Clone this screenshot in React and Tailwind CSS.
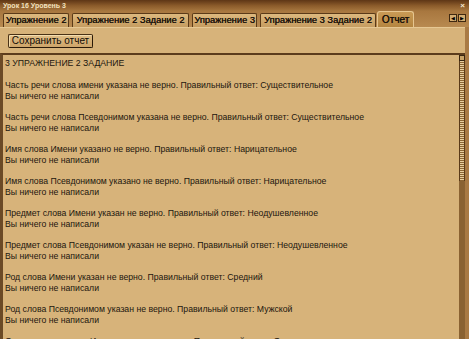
const tabs = [
  { label: "Упражнение 2", w: "w-[66px]" },
  { label: "Упражнение 2 Задание 2", w: "w-[117px]" },
  { label: "Упражнение 3", w: "w-[65px]" },
  { label: "Упражнение 3 Задание 2", w: "w-[116px]" },
];

const entries = [
  "Часть речи слова имени указана не верно. Правильный ответ: Существительное",
  "Часть речи слова Псевдонимом указана не верно. Правильный ответ: Существительное",
  "Имя слова Имени указано не верно. Правильный ответ: Нарицательное",
  "Имя слова Псевдонимом указано не верно. Правильный ответ: Нарицательное",
  "Предмет слова Имени указан не верно. Правильный ответ: Неодушевленное",
  "Предмет слова Псевдонимом указан не верно. Правильный ответ: Неодушевленное",
  "Род слова Имени указан не верно. Правильный ответ: Средний",
  "Род слова Псевдонимом указан не верно. Правильный ответ: Мужской",
  "Одушевление слова Имени указано не верно. Правильный ответ: Одушевленное",
];

export default function App() {
  return (
    <div className="w-[469px] h-[339px] overflow-hidden flex flex-col bg-[#a97a44] font-['Liberation_Sans',Arial,sans-serif]">
      {/* title bar */}
      <div className="h-[11px] shrink-0 flex items-center justify-between px-[3px] bg-gradient-to-b from-[#5e3616] via-[#8a5a2a] to-[#a7773f]">
        <span className="text-[7px] leading-none font-bold text-[#f3e2bf]">Урок 16 Уровень 3</span>
        <span className="text-[8px] leading-none font-bold text-[#f6ead0] mr-[1px]">×</span>
      </div>

      {/* tabs */}
      <div className="h-[16px] shrink-0 flex items-end px-[3px] gap-[3px] bg-gradient-to-b from-[#a8773f] to-[#b88a50]">
        {tabs.map((t) => (
          <div
            key={t.label}
            className={`${t.w} h-[14px] flex items-center justify-center rounded-t-[2px] border border-b-0 border-[#5a3a18] bg-gradient-to-b from-[#ddb97f] to-[#c59c60] text-[9.3px] leading-none text-[#1a120a] whitespace-nowrap [text-shadow:0.3px_0_0_#1a120a]`}
          >
            {t.label}
          </div>
        ))}
        <div className="w-[37px] h-[16px] -ml-[2px] flex items-center justify-center rounded-t-[3px] border border-b-0 border-[#e6c690] bg-gradient-to-b from-[#c99a55] to-[#b48540] text-[10px] leading-none text-[#1a120a] [text-shadow:0.3px_0_0_#1a120a]">
          Отчет
        </div>
        <div className="ml-auto mb-[5px] flex gap-[1px]">
          <div className="w-[8px] h-[8px] border border-[#3f2810] bg-[#d3ad72] flex items-center justify-center text-[5px] leading-none text-black">◀</div>
          <div className="w-[8px] h-[8px] border border-[#3f2810] bg-[#d3ad72] flex items-center justify-center text-[5px] leading-none text-black">▶</div>
        </div>
      </div>

      {/* panel */}
      <div className="flex-1 flex flex-col bg-[#d7b37a] border-t border-[#e6c894] mr-[4px]">
        <div className="h-[25px] shrink-0 flex items-center pl-[8px]">
          <div className="h-[14px] w-[85px] flex items-center justify-center rounded-[2px] border border-[#4a3216] border-r-[#2a1a08] border-b-[#2a1a08] bg-gradient-to-b from-[#e0bf88] to-[#cda468] shadow-[inset_1px_1px_0_#f3dcae] text-[10px] leading-none text-[#120c05]">
            Сохранить отчет
          </div>
        </div>

        <div className="flex-1 flex min-h-0 border-t-2 border-l-[3px] border-[#5c3c1c] border-l-[#6b4a26]">
          <div className="flex-1 overflow-hidden pl-[2px] pt-[3px] text-[8.7px] leading-[11px] text-[#1c160e]">
            <div className="mb-[11px]">3 УПРАЖНЕНИЕ 2 ЗАДАНИЕ</div>
            {entries.map((e, i) => (
              <div key={i} className="mb-[10px] whitespace-nowrap">
                <div>{e}</div>
                <div>Вы ничего не написали</div>
              </div>
            ))}
          </div>

          {/* scrollbar */}
          <div className="w-[6px] shrink-0 flex flex-col bg-[#8a6232]">
            <div className="h-[6px] bg-[#c8a266] border border-[#3a2610]" />
            <div className="h-[120px] bg-[repeating-linear-gradient(to_bottom,#e8cf9e_0px,#e8cf9e_1px,#8c6534_1px,#8c6534_2px)] border-x border-[#5a3a18]" />
            <div className="flex-1" />
            <div className="h-[6px] bg-[#c8a266] border border-[#3a2610]" />
          </div>
        </div>
      </div>

      {/* bottom frame */}
      <div className="h-[6px] shrink-0 bg-gradient-to-b from-[#4a2c10] via-[#8a5c2c] to-[#6a4420]" />
    </div>
  );
}
